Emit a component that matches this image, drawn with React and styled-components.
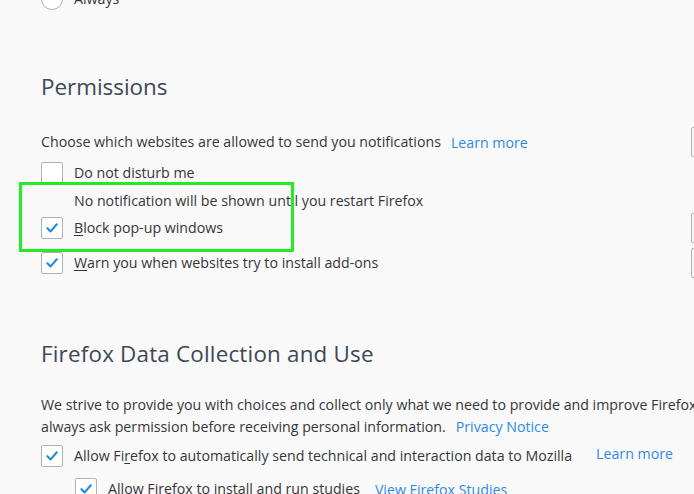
import React from "react";
import styled, { createGlobalStyle } from "styled-components";

const Global = createGlobalStyle`
  html, body { margin: 0; padding: 0; background: #f9f9fa; overflow: hidden; }
  body { font-family: "Open Sans", "Noto Sans", sans-serif; color: #363638; }
`;

const Page = styled.div`
  position: relative;
  width: 694px;
  height: 494px;
  overflow: hidden;
`;

const Content = styled.div`
  width: 740px;
  margin-top: -12px;
  padding-left: 41px;
  font-size: 14.2px;
`;

const Row = styled.div`
  display: flex;
  align-items: center;
  height: ${(p) => (p.$tall ? 30 : 22)}px;
  margin-top: ${(p) => p.$mt || 0}px;
  margin-left: ${(p) => p.$indent || 0}px;
`;

const Label = styled.span`
  margin-left: 11px;
  white-space: nowrap;
  line-height: 22px;
`;

const Key = styled.span`
  text-decoration: underline;
  text-underline-offset: 2px;
`;

const Link = styled.a`
  color: #2f8ae0;
  text-decoration: none;
  margin-left: ${(p) => p.$ml || 10}px;
  white-space: nowrap;
  position: relative;
  top: ${(p) => (p.$raise ? -3 : 0)}px;
`;

const Radio = styled.span`
  width: 20px;
  height: 20px;
  border-radius: 50%;
  border: 1px solid #b1b1b3;
  background: #fff;
  flex: none;
`;

const Box = styled.span`
  width: 20px;
  height: 20px;
  border-radius: 2px;
  border: 1px solid #b1b1b3;
  background: #fff;
  flex: none;
  display: flex;
  align-items: center;
  justify-content: center;
`;

const Heading = styled.h2`
  margin: ${(p) => p.$mt}px 0 0;
  font-size: 22.4px;
  font-weight: 400;
  line-height: 30px;
  color: #3d4855;
  white-space: nowrap;
  letter-spacing: ${(p) => p.$ls || 0}px;
`;

const Text = styled.p`
  margin: ${(p) => p.$mt || 0}px 0 0 ${(p) => p.$indent || 0}px;
  line-height: 22px;
  white-space: nowrap;
`;

const Spacer = styled.span`
  flex: 1;
`;

const SideButton = styled.span`
  width: 88px;
  height: 28px;
  border: 1px solid #b1b1b3;
  border-radius: 2px;
  background: #f5f5f6;
  flex: none;
`;

const Highlight = styled.div`
  position: absolute;
  left: 19px;
  top: 182px;
  width: 269px;
  height: 64px;
  border: 3px solid #24ea24;
`;

const Check = ({ on }) => (
  <Box>
    {on && (
      <svg width="14" height="14" viewBox="0 0 14 14">
        <path d="M2.4 7.2 L5.6 10.4 L11.8 3.3" fill="none" stroke="#1f8ad8" strokeWidth="2.1" strokeLinecap="round" strokeLinejoin="round" />
      </svg>
    )}
  </Box>
);

export default function App() {
  return (
    <Page>
      <Global />
      <Content>
        <Row>
          <Radio />
          <Label>Always</Label>
        </Row>

        <Heading $mt={62}>Permissions</Heading>

        <Row $tall $mt={25}>
          <Text>Choose which websites are allowed to send you notifications</Text>
          <Link $ml={10}>Learn more</Link>
          <Spacer />
          <SideButton />
        </Row>
        <Row $mt={5}>
          <Check />
          <Label>Do not disturb me</Label>
        </Row>
        <Text $indent={33} $mt={6}>No notification will be shown until you restart Firefox</Text>
        <Row $tall $mt={1}>
          <Check on />
          <Label><Key>B</Key>lock pop-up windows</Label>
          <Spacer />
          <SideButton />
        </Row>
        <Row $tall $mt={5}>
          <Check on />
          <Label><Key>W</Key>arn you when websites try to install add-ons</Label>
          <Spacer />
          <SideButton />
        </Row>

        <Heading $mt={61} $ls={0.2}>Firefox Data Collection and Use</Heading>

        <Text $mt={25}>
          We strive to provide you with choices and collect only what we need to provide and improve Firefox for everyone. We
          <br />
          always ask permission before receiving personal information.
          <Link $ml={10}>Privacy Notice</Link>
        </Text>
        <Row $mt={7}>
          <Check on />
          <Label>Allow Fi<Key>r</Key>efox to automatically send technical and interaction data to Mozilla</Label>
          <Link $ml={24} $raise>Learn more</Link>
        </Row>
        <Row $mt={11} $indent={34}>
          <Check on />
          <Label>Allow Firefox to install and run studies</Label>
          <Link $ml={15}>View Firefox Studies</Link>
        </Row>
      </Content>
      <Highlight />
    </Page>
  );
}
